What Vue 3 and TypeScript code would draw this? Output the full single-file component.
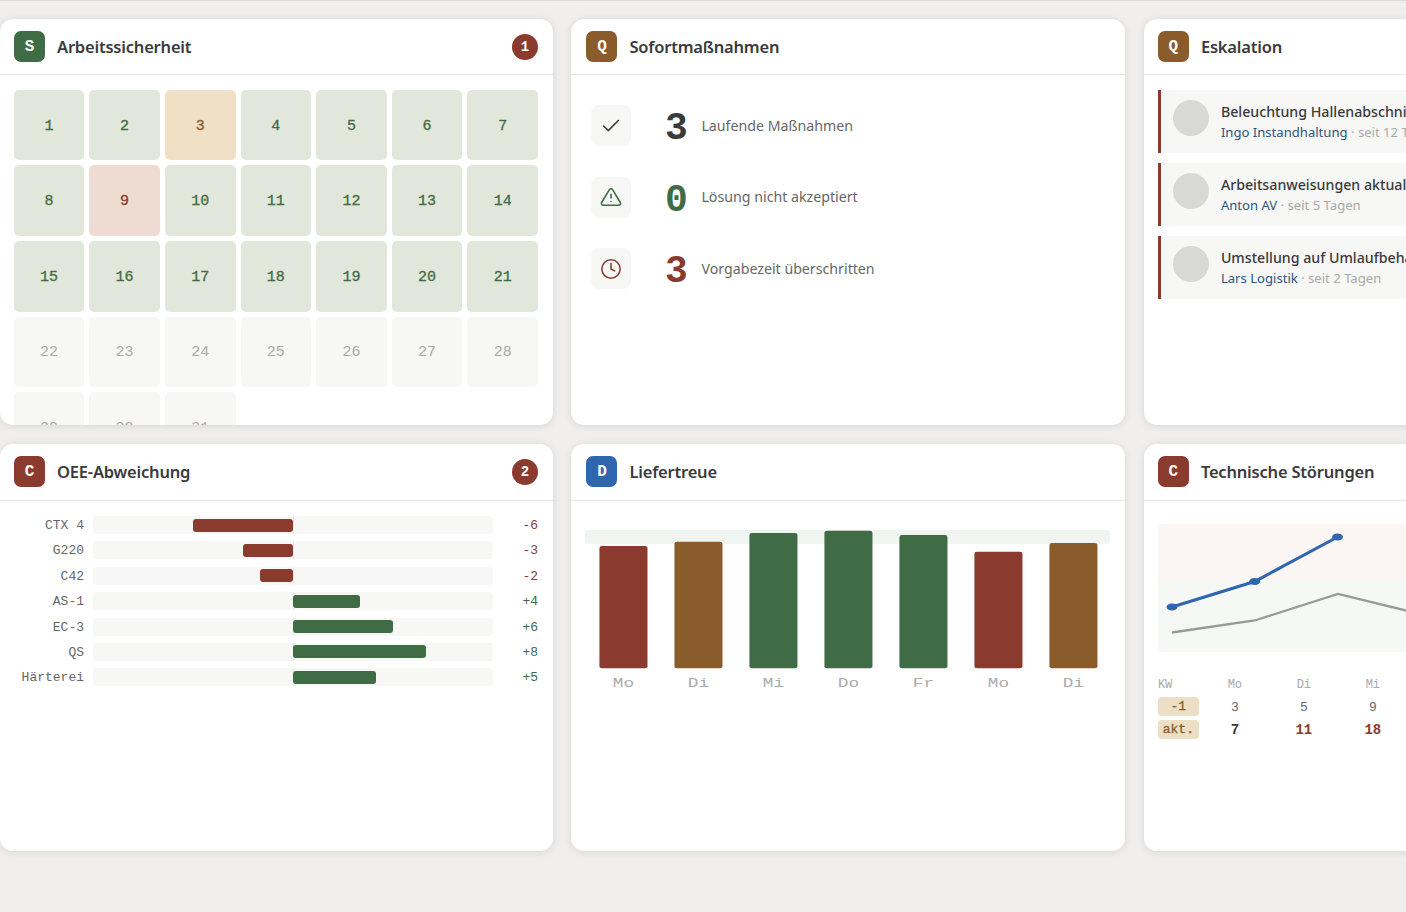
<script setup lang="ts">
type Tone = 'ok' | 'warn' | 'bad' | 'none'

const days: { n: number; tone: Tone }[] = Array.from({ length: 31 }, (_, i) => {
  const n = i + 1
  let tone: Tone = n > 21 ? 'none' : 'ok'
  if (n === 3) tone = 'warn'
  if (n === 9) tone = 'bad'
  return { n, tone }
})

const actions = [
  { icon: 'check', value: 3, label: 'Laufende Maßnahmen', tone: 'dark' },
  { icon: 'warning', value: 0, label: 'Lösung nicht akzeptiert', tone: 'ok' },
  { icon: 'clock', value: 3, label: 'Vorgabezeit überschritten', tone: 'bad' }
]

const escalations = [
  { title: 'Beleuchtung Hallenabschnitt', who: 'Ingo Instandhaltung', since: 'seit 12 Tagen' },
  { title: 'Arbeitsanweisungen aktualisieren', who: 'Anton AV', since: 'seit 5 Tagen' },
  { title: 'Umstellung auf Umlaufbehälter', who: 'Lars Logistik', since: 'seit 2 Tagen' }
]

const oee = [
  { name: 'CTX 4', value: -6 },
  { name: 'G220', value: -3 },
  { name: 'C42', value: -2 },
  { name: 'AS-1', value: 4 },
  { name: 'EC-3', value: 6 },
  { name: 'QS', value: 8 },
  { name: 'Härterei', value: 5 }
]

// half of the track is 12 units
const barStyle = (value: number) => {
  const width = (Math.abs(value) / 24) * 100
  return value < 0
    ? { right: '50%', width: `${width}%` }
    : { left: '50%', width: `${width}%` }
}

const formatDelta = (value: number) => (value > 0 ? `+${value}` : `${value}`)

const delivery = [
  { day: 'Mo', top: 31, color: '#8b3a2e' },
  { day: 'Di', top: 26.7, color: '#8a5c2b' },
  { day: 'Mi', top: 18, color: '#3f6b45' },
  { day: 'Do', top: 15.7, color: '#3f6b45' },
  { day: 'Fr', top: 20, color: '#3f6b45' },
  { day: 'Mo', top: 36.7, color: '#8b3a2e' },
  { day: 'Di', top: 28, color: '#8a5c2b' }
]

const faults = [
  { day: 'Mo', prev: 3, now: 7, bad: false },
  { day: 'Di', prev: 5, now: 11, bad: true },
  { day: 'Mi', prev: 9, now: 18, bad: true }
]
</script>

<template>
  <div class="page">
    <section class="card">
      <header class="card-head">
        <span class="badge green">S</span>
        <h2>Arbeitssicherheit</h2>
        <span class="count">1</span>
      </header>
      <div class="calendar">
        <div v-for="d in days" :key="d.n" class="day" :class="d.tone">{{ d.n }}</div>
      </div>
    </section>

    <section class="card">
      <header class="card-head mid">
        <span class="badge brown">Q</span>
        <h2>Sofortmaßnahmen</h2>
      </header>
      <div class="actions">
        <div v-for="a in actions" :key="a.label" class="action">
          <span class="action-icon" :class="a.tone">
            <svg width="22" height="22" viewBox="0 0 24 24" fill="none" stroke="currentColor" stroke-width="1.7" stroke-linecap="round" stroke-linejoin="round">
              <polyline v-if="a.icon === 'check'" points="20 6 9 17 4 12" />
              <template v-else-if="a.icon === 'warning'">
                <path d="M10.29 3.86 1.82 18a2 2 0 0 0 1.71 3h16.94a2 2 0 0 0 1.71-3L13.71 3.86a2 2 0 0 0-3.42 0z" />
                <line x1="12" y1="9" x2="12" y2="13" />
                <line x1="12" y1="17" x2="12.01" y2="17" />
              </template>
              <template v-else>
                <circle cx="12" cy="12" r="10" />
                <polyline points="12 6 12 12 16 14" />
              </template>
            </svg>
          </span>
          <span class="action-value" :class="a.tone">{{ a.value }}</span>
          <span class="action-label">{{ a.label }}</span>
        </div>
      </div>
    </section>

    <section class="card">
      <header class="card-head">
        <span class="badge brown">Q</span>
        <h2>Eskalation</h2>
      </header>
      <div class="escalations">
        <div v-for="e in escalations" :key="e.title" class="esc">
          <span class="avatar"></span>
          <div class="esc-text">
            <div class="esc-title">{{ e.title }}</div>
            <div class="esc-sub"><span class="who">{{ e.who }}</span> · {{ e.since }}</div>
          </div>
        </div>
      </div>
    </section>

    <section class="card">
      <header class="card-head head-tall">
        <span class="badge red">C</span>
        <h2>OEE-Abweichung</h2>
        <span class="count">2</span>
      </header>
      <div class="oee">
        <div v-for="row in oee" :key="row.name" class="oee-row">
          <span class="oee-name">{{ row.name }}</span>
          <div class="oee-track">
            <span class="oee-zero"></span>
            <span class="oee-bar" :class="row.value < 0 ? 'neg' : 'pos'" :style="barStyle(row.value)"></span>
          </div>
          <span class="oee-value" :class="row.value < 0 ? 'neg' : 'pos'">{{ formatDelta(row.value) }}</span>
        </div>
      </div>
    </section>

    <section class="card">
      <header class="card-head head-tall mid">
        <span class="badge blue">D</span>
        <h2>Liefertreue</h2>
      </header>
      <div class="delivery">
        <svg class="delivery-chart" viewBox="0 0 400 175" preserveAspectRatio="none">
          <rect x="0" y="15" width="400" height="14" rx="2" fill="#f1f5f1" />
          <g v-for="(b, i) in delivery" :key="i">
            <rect :x="11 + i * 57.14" :y="b.top" width="36.6" :height="153.3 - b.top" rx="2" :fill="b.color" />
            <text :x="29.3 + i * 57.14" y="172" text-anchor="middle" class="delivery-label">{{ b.day }}</text>
          </g>
        </svg>
      </div>
    </section>

    <section class="card">
      <header class="card-head head-tall">
        <span class="badge red">C</span>
        <h2>Technische Störungen</h2>
      </header>
      <div class="faults">
        <svg class="fault-chart" width="525" height="128" viewBox="0 0 525 128">
          <rect x="0" y="0" width="525" height="56" fill="#fbf5f3" />
          <rect x="0" y="56" width="525" height="72" fill="#f6f8f5" />
          <polyline points="14,108.5 96.7,96.5 180,70 262.7,90" fill="none" stroke="#999" stroke-width="2.3" />
          <polyline points="14,83 96.7,57.5 179.5,13" fill="none" stroke="#2f66ae" stroke-width="3" />
          <ellipse cx="14" cy="83" rx="5.5" ry="3.5" fill="#2f66ae" />
          <ellipse cx="96.7" cy="57.5" rx="5.5" ry="3.5" fill="#2f66ae" />
          <ellipse cx="179.5" cy="13" rx="5.5" ry="3.5" fill="#2f66ae" />
        </svg>
        <div class="fault-table">
          <span class="th first">KW</span>
          <span v-for="f in faults" :key="f.day" class="th">{{ f.day }}</span>
          <span class="chip">-1</span>
          <span v-for="f in faults" :key="f.day" class="td">{{ f.prev }}</span>
          <span class="chip">akt.</span>
          <span v-for="f in faults" :key="f.day" class="td now" :class="{ bad: f.bad }">{{ f.now }}</span>
        </div>
      </div>
    </section>
  </div>
</template>

<style>
html,
body {
  margin: 0;
  overflow: hidden;
  background: #f0efed;
}
</style>

<style scoped>
.page {
  width: 1406px;
  height: 912px;
  box-sizing: border-box;
  overflow: hidden;
  border-top: 1px solid #dcdcdc;
  padding-top: 18px;
  display: grid;
  grid-template-columns: 553px 554px 554px;
  grid-template-rows: 406px 407px;
  column-gap: 18.45px;
  row-gap: 19px;
  background: #f0efed;
  font-family: "Noto Sans", sans-serif;
  color: #3a3a3c;
}

.card {
  background: #fff;
  border-radius: 13px;
  box-shadow: 0 1px 8px rgba(0, 0, 0, 0.11);
  overflow: hidden;
}

.card-head {
  height: 56px;
  box-sizing: border-box;
  padding: 12px 15px 12px 14px;
  border-bottom: 1px solid #e6e6e4;
  display: flex;
  align-items: center;
  gap: 12px;
}

.card-head.mid {
  padding-left: 15px;
}

.head-tall {
  height: 57px;
  padding-bottom: 13px;
}

.card-head h2 {
  margin: 0;
  font-size: 16.5px;
  font-weight: 600;
  letter-spacing: -0.2px;
  flex: 1;
  white-space: nowrap;
}

.badge {
  width: 31px;
  height: 31px;
  padding-top: 1px;
  box-sizing: border-box;
  border-radius: 7px;
  display: flex;
  align-items: center;
  justify-content: center;
  color: #fff;
  font-family: "Liberation Mono", monospace;
  font-weight: 700;
  font-size: 16px;
  flex: none;
}

.green { background: #3f6b45; }
.brown { background: #8a5c2b; }
.red { background: #8b3a2e; }
.blue { background: #2f66ae; }

.count {
  width: 26px;
  height: 26px;
  border-radius: 50%;
  background: #8b3a2e;
  color: #fff;
  font-family: "Liberation Mono", monospace;
  font-size: 14px;
  font-weight: 700;
  display: flex;
  align-items: center;
  justify-content: center;
}

.calendar {
  padding: 14.7px 15px 0 13.7px;
  display: grid;
  grid-template-columns: repeat(7, 1fr);
  gap: 5px;
}

.day {
  aspect-ratio: 1;
  box-sizing: border-box;
  padding-top: 2px;
  border-radius: 5px;
  display: flex;
  align-items: center;
  justify-content: center;
  font-family: "Liberation Mono", monospace;
  font-size: 15px;
  -webkit-text-stroke: 0.3px currentColor;
}

.day.ok { background: #e1e7da; color: #3f6b45; }
.day.warn { background: #efe0c6; color: #8a5c2b; }
.day.bad { background: #eedcd2; color: #8b3a2e; }
.day.none { background: #f7f7f5; color: #aaa; -webkit-text-stroke: 0; }

.actions {
  padding: 30px 20px 0;
  display: flex;
  flex-direction: column;
  gap: 30.5px;
}

.action {
  display: flex;
  align-items: center;
  height: 41px;
}

.action-icon {
  width: 40px;
  height: 41px;
  border-radius: 8px;
  background: #f7f7f5;
  display: flex;
  align-items: center;
  justify-content: center;
  flex: none;
}

.action-value {
  margin-left: 33.5px;
  width: 23px;
  padding-top: 6px;
  font-family: "Liberation Mono", monospace;
  font-size: 38px;
  font-weight: 700;
  line-height: 41px;
}

.action-label {
  margin-left: 13.5px;
  padding-bottom: 1px;
  font-size: 14.2px;
  color: #666;
}

.dark { color: #3a3a3c; }
.action-icon.ok,
.action-value.ok { color: #3f6b45; }
.action-icon.bad,
.action-value.bad { color: #8b3a2e; }

.escalations {
  padding: 15px 14px 0;
  display: flex;
  flex-direction: column;
  gap: 10px;
}

.esc {
  height: 63px;
  box-sizing: border-box;
  border-left: 3px solid #8b3a2e;
  background: #f7f7f5;
  padding: 10px 12px;
  display: flex;
  gap: 12px;
}

.avatar {
  width: 36px;
  height: 36px;
  border-radius: 50%;
  background: #d8d8d6;
  flex: none;
}

.esc-text {
  white-space: nowrap;
}

.esc-title {
  font-size: 14.2px;
  font-weight: 500;
  line-height: 21px;
  margin-top: 1px;
}

.esc-sub {
  font-size: 13.1px;
  line-height: 20px;
  color: #aaa;
}

.who {
  color: #2f5583;
}

.oee {
  padding: 15px 14px 0;
  display: flex;
  flex-direction: column;
  gap: 7.4px;
}

.oee-row {
  display: flex;
  align-items: center;
  height: 18px;
  font-family: "Liberation Mono", monospace;
  font-size: 13px;
}

.oee-name {
  width: 70px;
  padding-top: 1px;
  text-align: right;
  color: #666;
}

.oee-track {
  position: relative;
  width: 400px;
  height: 18px;
  margin-left: 9px;
  background: #f7f7f5;
  border-radius: 3px;
}

.oee-zero {
  position: absolute;
  left: 50%;
  top: 0;
  bottom: 0;
  width: 1px;
  background: #e6e6e4;
}

.oee-bar {
  position: absolute;
  top: 2.5px;
  height: 13px;
  border-radius: 3px;
}

.oee-bar.neg { background: #8b3a2e; }
.oee-bar.pos { background: #3f6b45; }

.oee-value {
  flex: 1;
  padding-top: 1px;
  text-align: right;
  padding-right: 1px;
}

.oee-value.neg { color: #8b3a2e; }
.oee-value.pos { color: #3f6b45; }

.delivery {
  padding: 14px 15px 0 13.5px;
}

.delivery-chart {
  display: block;
  width: 525px;
  height: 175px;
}

.delivery-label {
  font-family: "Liberation Mono", monospace;
  font-size: 13.5px;
  fill: #aaa;
}

.faults {
  padding: 23px 0 0 14px;
  width: 525px;
}

.fault-chart {
  display: block;
}

.fault-table {
  margin-top: 23px;
  display: grid;
  grid-template-columns: 42.5px repeat(3, 69px);
  grid-template-rows: 20px 23px 23px;
  align-items: center;
  font-family: "Liberation Mono", monospace;
  font-size: 13px;
  color: #666;
}

.th {
  font-size: 12px;
  color: #aaa;
  text-align: center;
}

.th.first {
  text-align: left;
}

.chip {
  width: 41px;
  height: 19px;
  border-radius: 4px;
  background: #ecdfc6;
  color: #8a5c2b;
  font-size: 13px;
  -webkit-text-stroke: 0.3px currentColor;
  display: flex;
  align-items: center;
  justify-content: center;
}

.td {
  padding-top: 1px;
  text-align: center;
}

.td.now {
  font-weight: 700;
  font-size: 14px;
  color: #3a3a3c;
}

.td.bad {
  color: #8b3a2e;
}
</style>
